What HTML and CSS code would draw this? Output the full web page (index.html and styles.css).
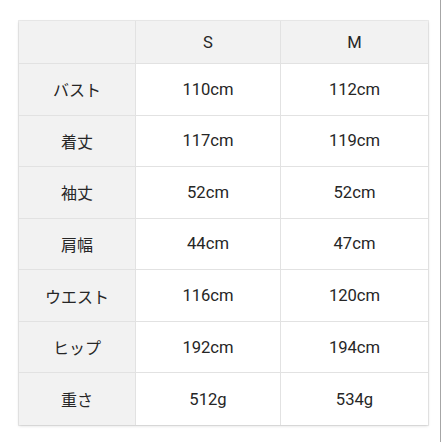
FILE: index.html
```html
<!DOCTYPE html>
<html lang="ja">
<head>
<meta charset="utf-8">
<link rel="stylesheet" href="styles.css">
</head>
<body>
<div class="page">
  <div class="size-table">
    <div class="cell head label"></div>
    <div class="cell head">S</div>
    <div class="cell head last">M</div>

    <div class="cell label">バスト</div>
    <div class="cell">110cm</div>
    <div class="cell last">112cm</div>

    <div class="cell label">着丈</div>
    <div class="cell">117cm</div>
    <div class="cell last">119cm</div>

    <div class="cell label">袖丈</div>
    <div class="cell">52cm</div>
    <div class="cell last">52cm</div>

    <div class="cell label">肩幅</div>
    <div class="cell">44cm</div>
    <div class="cell last">47cm</div>

    <div class="cell label">ウエスト</div>
    <div class="cell">116cm</div>
    <div class="cell last">120cm</div>

    <div class="cell label">ヒップ</div>
    <div class="cell">192cm</div>
    <div class="cell last">194cm</div>

    <div class="cell label bottom">重さ</div>
    <div class="cell bottom">512g</div>
    <div class="cell last bottom">534g</div>
  </div>
</div>
</body>
</html>
```

FILE: styles.css
```css
html, body {
  margin: 0;
  padding: 0;
  background: #ffffff;
}

.page {
  width: 441px;
  height: 442px;
  border-right: 1px solid #a6a6a6;
  padding: 21px 0 0 19px;
  box-sizing: border-box;
  font-family: Roboto, "Noto Sans CJK JP", sans-serif;
  color: #262626;
}

.size-table {
  display: grid;
  grid-template-columns: 117px 145px 147px;
  grid-template-rows: 43px repeat(7, 51.57px);
  width: 409px;
  box-shadow: 0 1px 3px rgba(0, 0, 0, 0.14), 0 0 0 1px #ececec;
  background: #ffffff;
}

.cell {
  display: flex;
  align-items: center;
  justify-content: center;
  font-size: 16.6px;
  border-right: 1px solid #e2e2e2;
  border-bottom: 1px solid #e2e2e2;
  box-sizing: border-box;
}

.cell.last {
  border-right: none;
}

.cell.bottom {
  border-bottom: none;
}

.head,
.label {
  background: #f2f2f2;
}

.label {
  font-family: "Noto Sans CJK JP", sans-serif;
  font-size: 16px;
}
```
